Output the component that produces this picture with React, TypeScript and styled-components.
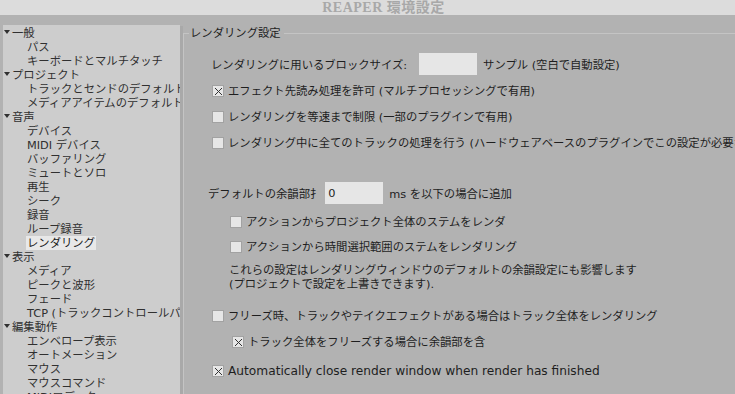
import styled, { createGlobalStyle } from 'styled-components';

const GlobalStyle = createGlobalStyle`
    html, body {
        margin: 0;
        padding: 0;
        background: #b2b2b2;
    }
    * {
        box-sizing: border-box;
    }
`;

const treeItems = [
    { text: '一般', parent: true },
    { text: 'パス' },
    { text: 'キーボードとマルチタッチ' },
    { text: 'プロジェクト', parent: true },
    { text: 'トラックとセンドのデフォルト' },
    { text: 'メディアアイテムのデフォルト' },
    { text: '音声', parent: true },
    { text: 'デバイス' },
    { text: 'MIDI デバイス' },
    { text: 'バッファリング' },
    { text: 'ミュートとソロ' },
    { text: '再生' },
    { text: 'シーク' },
    { text: '録音' },
    { text: 'ループ録音' },
    { text: 'レンダリング', selected: true },
    { text: '表示', parent: true },
    { text: 'メディア' },
    { text: 'ピークと波形' },
    { text: 'フェード' },
    { text: 'TCP (トラックコントロールパネル)' },
    { text: '編集動作', parent: true },
    { text: 'エンベロープ表示' },
    { text: 'オートメーション' },
    { text: 'マウス' },
    { text: 'マウスコマンド' },
    { text: 'MIDIエディタ' },
];

function CheckBox({ checked }: { checked?: boolean }) {
    return (
        <Box>
            {checked ? (
                <svg width="9" height="9" viewBox="0 0 9 9">
                    <path d="M1 1 L8 8 M8 1 L1 8" stroke="#333" strokeWidth="1" fill="none" />
                </svg>
            ) : null}
        </Box>
    );
}

type CheckRowProps = {
    label: string;
    checked?: boolean;
    indent: number;
    top: number;
    latin?: boolean;
};

function CheckRow({ label, checked, indent, top, latin }: CheckRowProps) {
    return (
        <CheckLine $indent={indent} $top={top} $latin={!!latin}>
            <CheckBox checked={checked} />
            <span>{label}</span>
        </CheckLine>
    );
}

export default function App() {
    return (
        <>
            <GlobalStyle />
            <Window>
                <TitleBar>REAPER 環境設定</TitleBar>
                <Body>
                    <Tree>
                        {treeItems.map(item => (
                            <TreeRow key={item.text} $parent={!!item.parent}>
                                {item.parent ? <Arrow /> : null}
                                <TreeLabel $selected={!!item.selected}>{item.text}</TreeLabel>
                            </TreeRow>
                        ))}
                    </Tree>
                    <Splitter />
                    <Group>
                        <Legend>レンダリング設定</Legend>
                        <FieldLine $indent={27} $top={19}>
                            <span>レンダリングに用いるブロックサイズ:</span>
                            <TextInput $gap={12} />
                            <span>サンプル (空白で自動設定)</span>
                        </FieldLine>
                        <CheckRow indent={28} top={9} checked label="エフェクト先読み処理を許可 (マルチプロセッシングで有用)" />
                        <CheckRow indent={28} top={12} label="レンダリングを等速まで制限 (一部のプラグインで有用)" />
                        <CheckRow indent={28} top={12} label="レンダリング中に全てのトラックの処理を行う (ハードウェアベースのプラグインでこの設定が必要な場合)" />
                        <FieldLine $indent={24} $top={32}>
                            <span>デフォルトの余韻部扌</span>
                            <TextInput $gap={4}>0</TextInput>
                            <span>ms を以下の場合に追加</span>
                        </FieldLine>
                        <CheckRow indent={46} top={11} label="アクションからプロジェクト全体のステムをレンダ" />
                        <CheckRow indent={46} top={11} label="アクションから時間選択範囲のステムをレンダリング" />
                        <Note>
                            これらの設定はレンダリングウィンドウのデフォルトの余韻設定にも影響します
                            <br />
                            (プロジェクトで設定を上書きできます).
                        </Note>
                        <CheckRow indent={28} top={18} label="フリーズ時、トラックやテイクエフェクトがある場合はトラック全体をレンダリング" />
                        <CheckRow indent={48} top={12} checked label="トラック全体をフリーズする場合に余韻部を含" />
                        <CheckRow indent={28} top={15} checked latin label="Automatically close render window when render has finished" />
                    </Group>
                </Body>
            </Window>
        </>
    );
}

const Window = styled.div`
    width: 735px;
    height: 394px;
    overflow: hidden;
    display: flex;
    flex-direction: column;
    background: #b2b2b2;
    font-family: "DejaVu Sans", "Noto Sans CJK JP", sans-serif;
    font-size: 11.33px;
    color: #1e1e1e;
`;

const TitleBar = styled.div`
    height: 15px;
    flex-shrink: 0;
    background: #dcdcdc;
    display: flex;
    justify-content: center;
    align-items: center;
    padding-left: 32px;
    font-family: "Liberation Serif", "Noto Sans CJK JP", serif;
    font-size: 14px;
    font-weight: bold;
    color: #a8a8a8;
    line-height: 15px;
    letter-spacing: 0.5px;
`;

const Body = styled.div`
    flex: 1;
    display: flex;
    padding: 11px 0 0 3px;
    min-height: 0;
`;

const Tree = styled.div`
    width: 177px;
    flex-shrink: 0;
    background: #cdcdcd;
    overflow: hidden;
    margin-top: -1px;
    padding-top: 1px;
`;

const TreeRow = styled.div<{ $parent: boolean }>`
    height: 14px;
    line-height: 14px;
    display: flex;
    align-items: center;
    padding-left: ${p => (p.$parent ? '1px' : '23px')};
    white-space: nowrap;
    color: #303030;
`;

const Arrow = styled.span`
    width: 0;
    height: 0;
    border-left: 3px solid transparent;
    border-right: 3px solid transparent;
    border-top: 4px solid #303030;
    margin-right: 1px;
    margin-top: -3px;
`;

const TreeLabel = styled.span<{ $selected: boolean }>`
    padding: 0 1px;
    background: ${p => (p.$selected ? '#e8e8e8' : 'transparent')};
    color: ${p => (p.$selected ? '#1a1a1a' : 'inherit')};
`;

const Splitter = styled.div`
    width: 3px;
    flex-shrink: 0;
    background: #a9a9a9;
`;

const Group = styled.div`
    position: relative;
    flex: 1;
    margin-top: 7px;
    border-top: 1px solid #c4c4c4;
    border-left: 1px solid #c4c4c4;
    display: flex;
    flex-direction: column;
    white-space: nowrap;
`;

const Legend = styled.span`
    position: absolute;
    top: -8px;
    left: 5px;
    padding: 0 3px 0 1px;
    background: #b2b2b2;
    line-height: 14px;
`;

const FieldLine = styled.div<{ $indent: number; $top: number }>`
    display: flex;
    align-items: center;
    margin-left: ${p => p.$indent}px;
    margin-top: ${p => p.$top}px;
    height: 22px;
`;

const TextInput = styled.span<{ $gap: number }>`
    width: 58px;
    height: 22px;
    margin: 0 6px 0 ${p => p.$gap}px;
    background: #e6e6e6;
    padding-left: 3px;
    line-height: 22px;
`;

const CheckLine = styled.div<{ $indent: number; $top: number; $latin: boolean }>`
    display: flex;
    align-items: center;
    gap: 4px;
    height: 14px;
    line-height: 14px;
    margin-left: ${p => p.$indent}px;
    margin-top: ${p => p.$top}px;
    font-size: ${p => (p.$latin ? '12.2px' : 'inherit')};
`;

const Box = styled.span`
    width: 12px;
    height: 12px;
    flex-shrink: 0;
    background: #e6e6e6;
    border: 1px solid #a2a2a2;
    display: flex;
    align-items: center;
    justify-content: center;
`;

const Note = styled.div`
    margin: 9px 0 0 45px;
    line-height: 14px;
`;
